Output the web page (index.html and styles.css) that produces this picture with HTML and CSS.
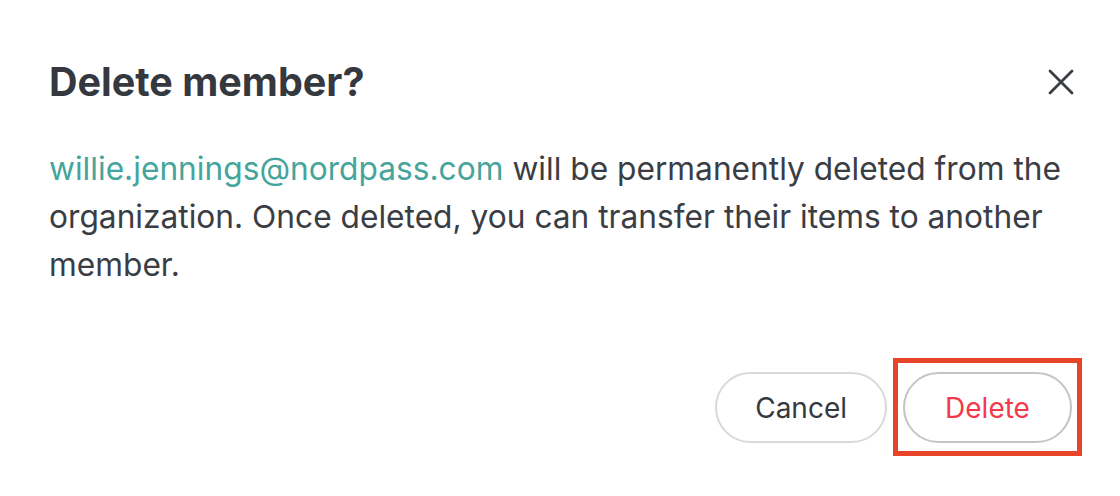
FILE: index.html
```html
<!DOCTYPE html>
<html lang="en">
<head>
    <meta charset="UTF-8">
    <meta name="viewport" content="width=device-width, initial-scale=1.0">
    <title>Delete member</title>
    <link rel="stylesheet" href="styles.css">
</head>
<body>
    <div class="dialog">
        <div class="dialog-header">
            <h1 class="dialog-title">Delete member?</h1>
            <button class="close-btn" aria-label="Close">
                <svg width="26" height="26" viewBox="0 0 26 26" fill="none">
                    <path d="M2 2L24 24M24 2L2 24" stroke="#3a3d44" stroke-width="2.8" stroke-linecap="round"/>
                </svg>
            </button>
        </div>

        <p class="dialog-text">
            <span class="email">willie.jennings@nordpass.com</span> will be permanently deleted from the organization. Once deleted, you can transfer their items to another member.
        </p>

        <div class="dialog-actions">
            <button class="btn">Cancel</button>
            <button class="btn btn-danger highlighted">Delete</button>
        </div>
    </div>
</body>
</html>
```

FILE: styles.css
```css
body {
    margin: 0;
    background-color: #ffffff;
    font-family: Inter, "Noto Sans", sans-serif;
    color: #3a3d44;
}

.dialog {
    width: 1120px;
    height: 496px;
    box-sizing: border-box;
    padding: 58px 48px 0 49px;
}

.dialog-header {
    display: flex;
    justify-content: space-between;
    align-items: center;
}

.dialog-title {
    margin: 0;
    font-size: 39.5px;
    font-weight: 700;
    line-height: 48px;
    color: #35383f;
}

.close-btn {
    background: none;
    border: none;
    padding: 0;
    margin-right: -2px;
    width: 26px;
    height: 26px;
    cursor: pointer;
}

.dialog-text {
    margin: 39px 0 0;
    font-size: 31.7px;
    line-height: 48px;
    color: #3a3d44;
}

.email {
    color: #45a59c;
}

.dialog-actions {
    display: flex;
    justify-content: flex-end;
    gap: 16px;
    margin-top: 83px;
}

.btn {
    height: 71px;
    padding: 0 38px;
    background: #ffffff;
    border: 2px solid #d9d9dc;
    border-radius: 36px;
    font-family: Inter, "Noto Sans", sans-serif;
    font-size: 28px;
    color: #35383f;
    cursor: pointer;
}

.btn-danger {
    width: 169px;
    color: #f23a4c;
    border-color: #c3c3c9;
}

.highlighted {
    position: relative;
}

.highlighted::after {
    content: "";
    position: absolute;
    top: -16px;
    bottom: -15px;
    left: -12px;
    right: -12px;
    border: 5px solid #e8442a;
}
```
